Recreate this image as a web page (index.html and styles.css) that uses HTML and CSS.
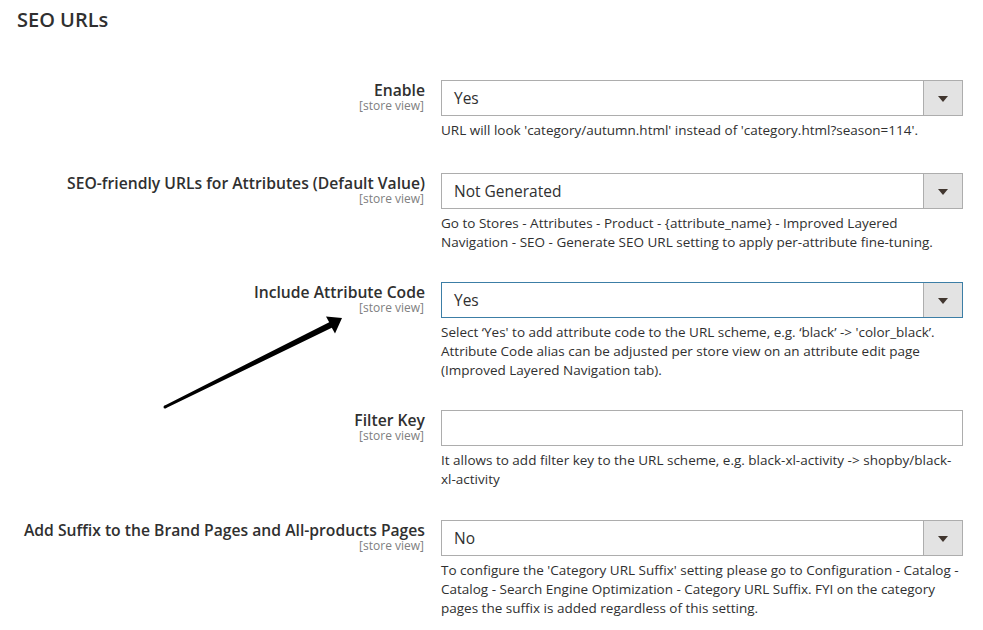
FILE: index.html
```
<!DOCTYPE html>
<html lang="en">
<head>
    <meta charset="UTF-8">
    <meta name="viewport" content="width=device-width, initial-scale=1.0">
    <title>SEO URLs</title>
    <link rel="stylesheet" href="styles.css">
</head>
<body>

    <h2 class="section-title">SEO URLs</h2>

    <div class="config-form">
        <div class="config-row">
            <div class="config-label">
                <span class="label-text">Enable</span>
                <span class="scope">[store view]</span>
            </div>
            <div class="config-value">
                <div class="select-box">
                    <span class="select-text">Yes</span>
                    <span class="select-btn"><span class="caret"></span></span>
                </div>
                <p class="note">URL will look 'category/autumn.html' instead of 'category.html?season=114'.</p>
            </div>
        </div>

        <div class="config-row">
            <div class="config-label">
                <span class="label-text">SEO-friendly URLs for Attributes (Default Value)</span>
                <span class="scope">[store view]</span>
            </div>
            <div class="config-value">
                <div class="select-box">
                    <span class="select-text">Not Generated</span>
                    <span class="select-btn"><span class="caret"></span></span>
                </div>
                <p class="note">Go to Stores - Attributes - Product - {attribute_name} - Improved Layered Navigation - SEO - Generate SEO URL setting to apply per-attribute fine-tuning.</p>
            </div>
        </div>

        <div class="config-row">
            <div class="config-label">
                <span class="label-text">Include Attribute Code</span>
                <span class="scope">[store view]</span>
            </div>
            <div class="config-value">
                <div class="select-box focused">
                    <span class="select-text">Yes</span>
                    <span class="select-btn"><span class="caret"></span></span>
                </div>
                <p class="note">Select ‘Yes' to add attribute code to the URL scheme, e.g. ‘black’ -&gt; 'color_black’. Attribute Code alias can be adjusted per store view on an attribute edit page (Improved Layered Navigation tab).</p>
            </div>
        </div>

        <div class="config-row">
            <div class="config-label">
                <span class="label-text">Filter Key</span>
                <span class="scope">[store view]</span>
            </div>
            <div class="config-value">
                <div class="text-input"></div>
                <p class="note">It allows to add filter key to the URL scheme, e.g. black-xl-activity -&gt; shopby/black-xl-activity</p>
            </div>
        </div>

        <div class="config-row">
            <div class="config-label">
                <span class="label-text">Add Suffix to the Brand Pages and All-products Pages</span>
                <span class="scope">[store view]</span>
            </div>
            <div class="config-value">
                <div class="select-box">
                    <span class="select-text">No</span>
                    <span class="select-btn"><span class="caret"></span></span>
                </div>
                <p class="note">To configure the 'Category URL Suffix' setting please go to Configuration - Catalog - Catalog - Search Engine Optimization - Category URL Suffix. FYI on the category pages the suffix is added regardless of this setting.</p>
            </div>
        </div>
    </div>

    <!-- annotation arrow pointing at the "Include Attribute Code" field -->
    <svg class="pointer-arrow" width="983" height="630" viewBox="0 0 983 630">
        <polygon points="164.3,405.7 329.2,322.3 326,316.5 342,318 335,333.5 331.8,327.7 165.7,408.3" fill="#000"/>
        <circle cx="165" cy="407" r="1.5" fill="#000"/>
    </svg>

</body>
</html>
```

FILE: styles.css
```
body {
    font-family: "Open Sans", "Liberation Sans", sans-serif;
    color: #303030;
    background-color: #fff;
    margin: 0;
    padding: 0;
    position: relative;
    width: 983px;
    height: 630px;
    overflow: hidden;
}

.section-title {
    margin: 0;
    padding: 8px 0 0 17px;
    font-size: 20px;
    line-height: 24px;
    font-weight: 600;
    color: #303030;
}

.config-form {
    margin-top: 48px;
}

.config-row {
    display: grid;
    grid-template-columns: 425px 522px;
    column-gap: 16px;
    align-items: start;
    margin-bottom: 30px;
}

.config-row:first-child {
    margin-bottom: 33px;
}

.config-row:nth-child(4) {
    margin-bottom: 31px;
}

.config-label {
    display: flex;
    flex-direction: column;
    align-items: flex-end;
    text-align: right;
    padding-top: 1px;
}

.label-text {
    font-size: 15.7px;
    line-height: 18px;
    font-weight: 600;
    color: #303030;
}

.scope {
    font-size: 12px;
    line-height: 14px;
    color: #808080;
    margin-right: 1px;
}

.select-box {
    display: flex;
    height: 36px;
    box-sizing: border-box;
    border: 1px solid #adadad;
    background-color: #fff;
}

.select-box.focused {
    border-color: #3c7ea6;
}

.select-text {
    flex: 1;
    padding-left: 12px;
    font-size: 15.5px;
    line-height: 34px;
    color: #303030;
}

.select-btn {
    width: 38px;
    background-color: #e3e3e3;
    border-left: 1px solid #adadad;
    display: flex;
    align-items: center;
    justify-content: center;
}

.caret {
    width: 0;
    height: 0;
    border-left: 5px solid transparent;
    border-right: 5px solid transparent;
    border-top: 6px solid #41362f;
    margin-top: 1px;
}

.text-input {
    height: 36px;
    box-sizing: border-box;
    border: 1px solid #adadad;
    background-color: #fff;
}

.note {
    margin: 5px 0 0 0;
    font-size: 13.5px;
    line-height: 19px;
    color: #303030;
}

.pointer-arrow {
    position: absolute;
    left: 0;
    top: 0;
    pointer-events: none;
}
```
